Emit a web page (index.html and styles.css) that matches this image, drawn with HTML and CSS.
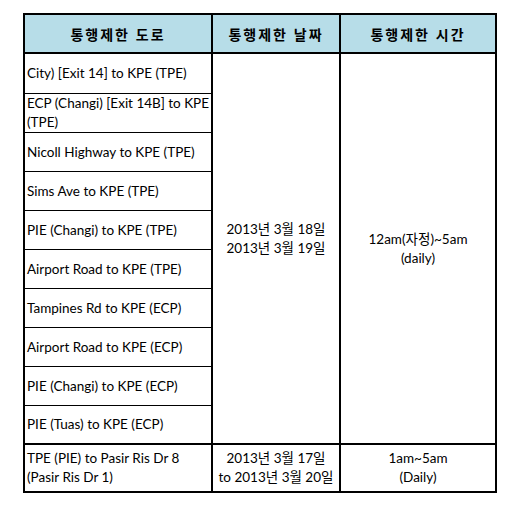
FILE: index.html
```html
<!DOCTYPE html>
<html lang="ko">
<head>
<meta charset="utf-8">
<title>통행제한</title>
<link rel="stylesheet" href="styles.css">
</head>
<body>
<table class="closures">
  <thead>
    <tr class="head-row">
      <th class="c1">통행제한 도로</th>
      <th class="c2">통행제한 날짜</th>
      <th class="c3">통행제한 시간</th>
    </tr>
  </thead>
  <tbody>
    <tr class="row first">
      <td class="road">City) [Exit 14] to KPE (TPE)</td>
      <td class="merged date" rowspan="10"><div class="date-block">2013년 3월 18일<br>2013년 3월 19일</div></td>
      <td class="merged time" rowspan="10">12am(<span class="ko">자정</span>)~5am<br>(daily)</td>
    </tr>
    <tr class="row"><td class="road">ECP (Changi) [Exit 14B] to KPE (TPE)</td></tr>
    <tr class="row"><td class="road">Nicoll Highway to KPE (TPE)</td></tr>
    <tr class="row"><td class="road">Sims Ave to KPE (TPE)</td></tr>
    <tr class="row"><td class="road">PIE (Changi) to KPE (TPE)</td></tr>
    <tr class="row"><td class="road">Airport Road to KPE (TPE)</td></tr>
    <tr class="row"><td class="road">Tampines Rd to KPE (ECP)</td></tr>
    <tr class="row"><td class="road">Airport Road to KPE (ECP)</td></tr>
    <tr class="row"><td class="road">PIE (Changi) to KPE (ECP)</td></tr>
    <tr class="row"><td class="road end">PIE (Tuas) to KPE (ECP)</td></tr>
    <tr class="last-row">
      <td class="road final">TPE (PIE) to Pasir Ris Dr 8<br>(Pasir Ris Dr 1)</td>
      <td class="date final-mid">2013년 3월 17일<br>to 2013년 3월 20일</td>
      <td class="time">1am~5am<br>(Daily)</td>
    </tr>
  </tbody>
</table>
</body>
</html>
```

FILE: styles.css
```css
html, body {
  margin: 0;
  padding: 0;
  background: #ffffff;
}

body {
  font-family: "Lato", "Noto Sans CJK KR", sans-serif;
  font-size: 13.5px;
  color: #000;
}

.closures {
  margin: 13px 0 0 23px;
  border: 2px solid #000;
  border-spacing: 0;
  table-layout: fixed;
  width: 474px;
}

.c1 { width: 186px; }
.c2 { width: 126px; }
.c3 { width: 154px; }

.head-row { height: 39px; }

th {
  background: #b7dde8;
  border-bottom: 2px solid #000;
  font-family: "Noto Sans CJK KR", sans-serif;
  font-weight: 700;
  font-size: 14px;
  letter-spacing: 2px;
  padding: 0;
  text-align: center;
  vertical-align: middle;
}

th.c1, th.c2 { border-right: 2px solid #000; }

td {
  padding: 0;
  line-height: 19px;
  vertical-align: middle;
}

.row { height: 39px; }
.row.first { height: 40px; }
.last-row { height: 46px; }

.road {
  padding-left: 2px;
  border-right: 2px solid #000;
  border-bottom: 1px solid #000;
  text-align: left;
}

.road.end { border-bottom: 2px solid #000; }
.road.final { border-bottom: 0; }

.merged { border-bottom: 2px solid #000; }

.date {
  text-align: center;
  border-right: 2px solid #000;
}

.date-block { padding-bottom: 20px; }

.time { text-align: center; }

.ko { font-family: "Noto Sans CJK KR", sans-serif; }
```
